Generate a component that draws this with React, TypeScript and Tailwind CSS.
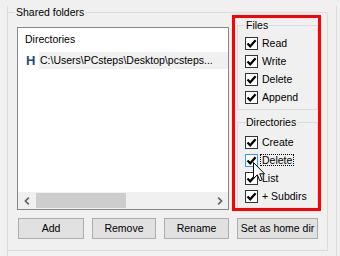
const font = "font-['Liberation_Sans',Arial,sans-serif]";

function CheckMark() {
  return (
    <svg width="11" height="11" viewBox="0 0 11 11">
      <path d="M1.5 5.5 L4.2 8.3 L9.6 2.2" fill="none" stroke="#000" strokeWidth="2.2" />
    </svg>
  );
}

function Check({ label, hover, focus }: { label: string; hover?: boolean; focus?: boolean }) {
  return (
    <div className="flex h-[18px] items-center">
      <span
        className={`flex h-[13px] w-[13px] shrink-0 items-center justify-center border bg-white ${
          hover ? "border-[#3399ff]" : "border-[#333333]"
        }`}
      >
        <CheckMark />
      </span>
      {focus ? (
        <span className="ml-[2px] border border-dotted border-black px-px leading-[10px]">{label}</span>
      ) : (
        <span className="ml-[4px] leading-[13px]">{label}</span>
      )}
    </div>
  );
}

function Btn({ label, w }: { label: string; w: string }) {
  return (
    <button className={`flex h-[21px] items-center justify-center border border-[#adadad] bg-[#e1e1e1] ${w}`}>
      {label}
    </button>
  );
}

export default function App() {
  return (
    <div className={`relative h-[256px] w-[340px] overflow-hidden bg-[#f0f0f0] pl-[7px] text-[10.5px] text-black ${font}`}>
      <div className="h-full w-[330px] border-x border-[#dcdcdc]">
        {/* Shared folders group */}
        <fieldset className="-ml-px mt-[6px] w-[321px] border border-[#dcdcdc] px-[9px] pb-[11px]">
          <legend className="-ml-[2px] px-px leading-[13px]">Shared folders</legend>

          <div className="flex items-start gap-[8px]">
            {/* Directories list */}
            <div className="mt-[8px] flex h-[183px] w-[212px] flex-col border border-[#828790] bg-white">
              <div className="flex h-[24px] items-center pl-[7px]">Directories</div>
              <div className="flex h-[17px] items-center">
                <span className="w-[21px] pl-[8px] text-[13px] font-bold leading-[13px] text-[#1e4e7c]">H</span>
                <span className="flex h-full flex-1 items-center overflow-hidden whitespace-nowrap bg-[#f0f0f0] pl-px">
                  C:\Users\PCsteps\Desktop\pcsteps...
                </span>
              </div>
              <div className="flex-1" />
              <div className="flex h-[17px] items-center bg-[#f0f0f0]">
                <span className="flex h-full w-[17px] items-center justify-center">
                  <svg width="6" height="8" viewBox="0 0 6 8">
                    <path d="M4.8 0.6 L1.4 4 L4.8 7.4" fill="none" stroke="#606060" strokeWidth="1.6" />
                  </svg>
                </span>
                <span className="ml-px h-[15px] w-[90px] bg-[#cdcdcd]" />
                <span className="flex-1" />
                <span className="flex h-full w-[17px] items-center justify-center">
                  <svg width="6" height="8" viewBox="0 0 6 8">
                    <path d="M1.2 0.6 L4.6 4 L1.2 7.4" fill="none" stroke="#606060" strokeWidth="1.6" />
                  </svg>
                </span>
              </div>
            </div>

            {/* Permissions */}
            <div className="flex w-[81px] flex-col">
              <fieldset className="border border-[#dcdcdc] pb-[3px] pl-[7px] pt-[2px]">
                <legend className="px-px leading-[13px]">Files</legend>
                <Check label="Read" />
                <Check label="Write" />
                <Check label="Delete" />
                <Check label="Append" />
              </fieldset>
              <fieldset className="mt-[6px] border border-[#dcdcdc] pb-[4px] pl-[7px] pt-[4px]">
                <legend className="px-px leading-[13px]">Directories</legend>
                <Check label="Create" />
                <Check label="Delete" hover focus />
                <Check label="List" />
                <Check label="+ Subdirs" />
              </fieldset>
            </div>
          </div>

          <div className="ml-px mt-[8px] flex gap-[8px]">
            <Btn label="Add" w="w-[66px]" />
            <Btn label="Remove" w="w-[64px]" />
            <Btn label="Rename" w="w-[65px]" />
            <Btn label="Set as home dir" w="w-[81px]" />
          </div>
        </fieldset>
      </div>

      {/* red highlight annotation */}
      <div className="pointer-events-none absolute left-[232px] top-[15px] h-[196px] w-[89px] border-[3px] border-[#ff0000]" />

      {/* mouse cursor */}
      <svg className="pointer-events-none absolute left-[253px] top-[162px]" width="13" height="21" viewBox="0 0 13 21">
        <path
          d="M0.5 0.5 L0.5 16.5 L4.3 12.8 L6.8 18.8 L9.2 17.8 L6.7 11.8 L11.5 11.8 Z"
          fill="#fff"
          stroke="#000"
          strokeWidth="1"
          strokeLinejoin="miter"
        />
      </svg>
    </div>
  );
}
